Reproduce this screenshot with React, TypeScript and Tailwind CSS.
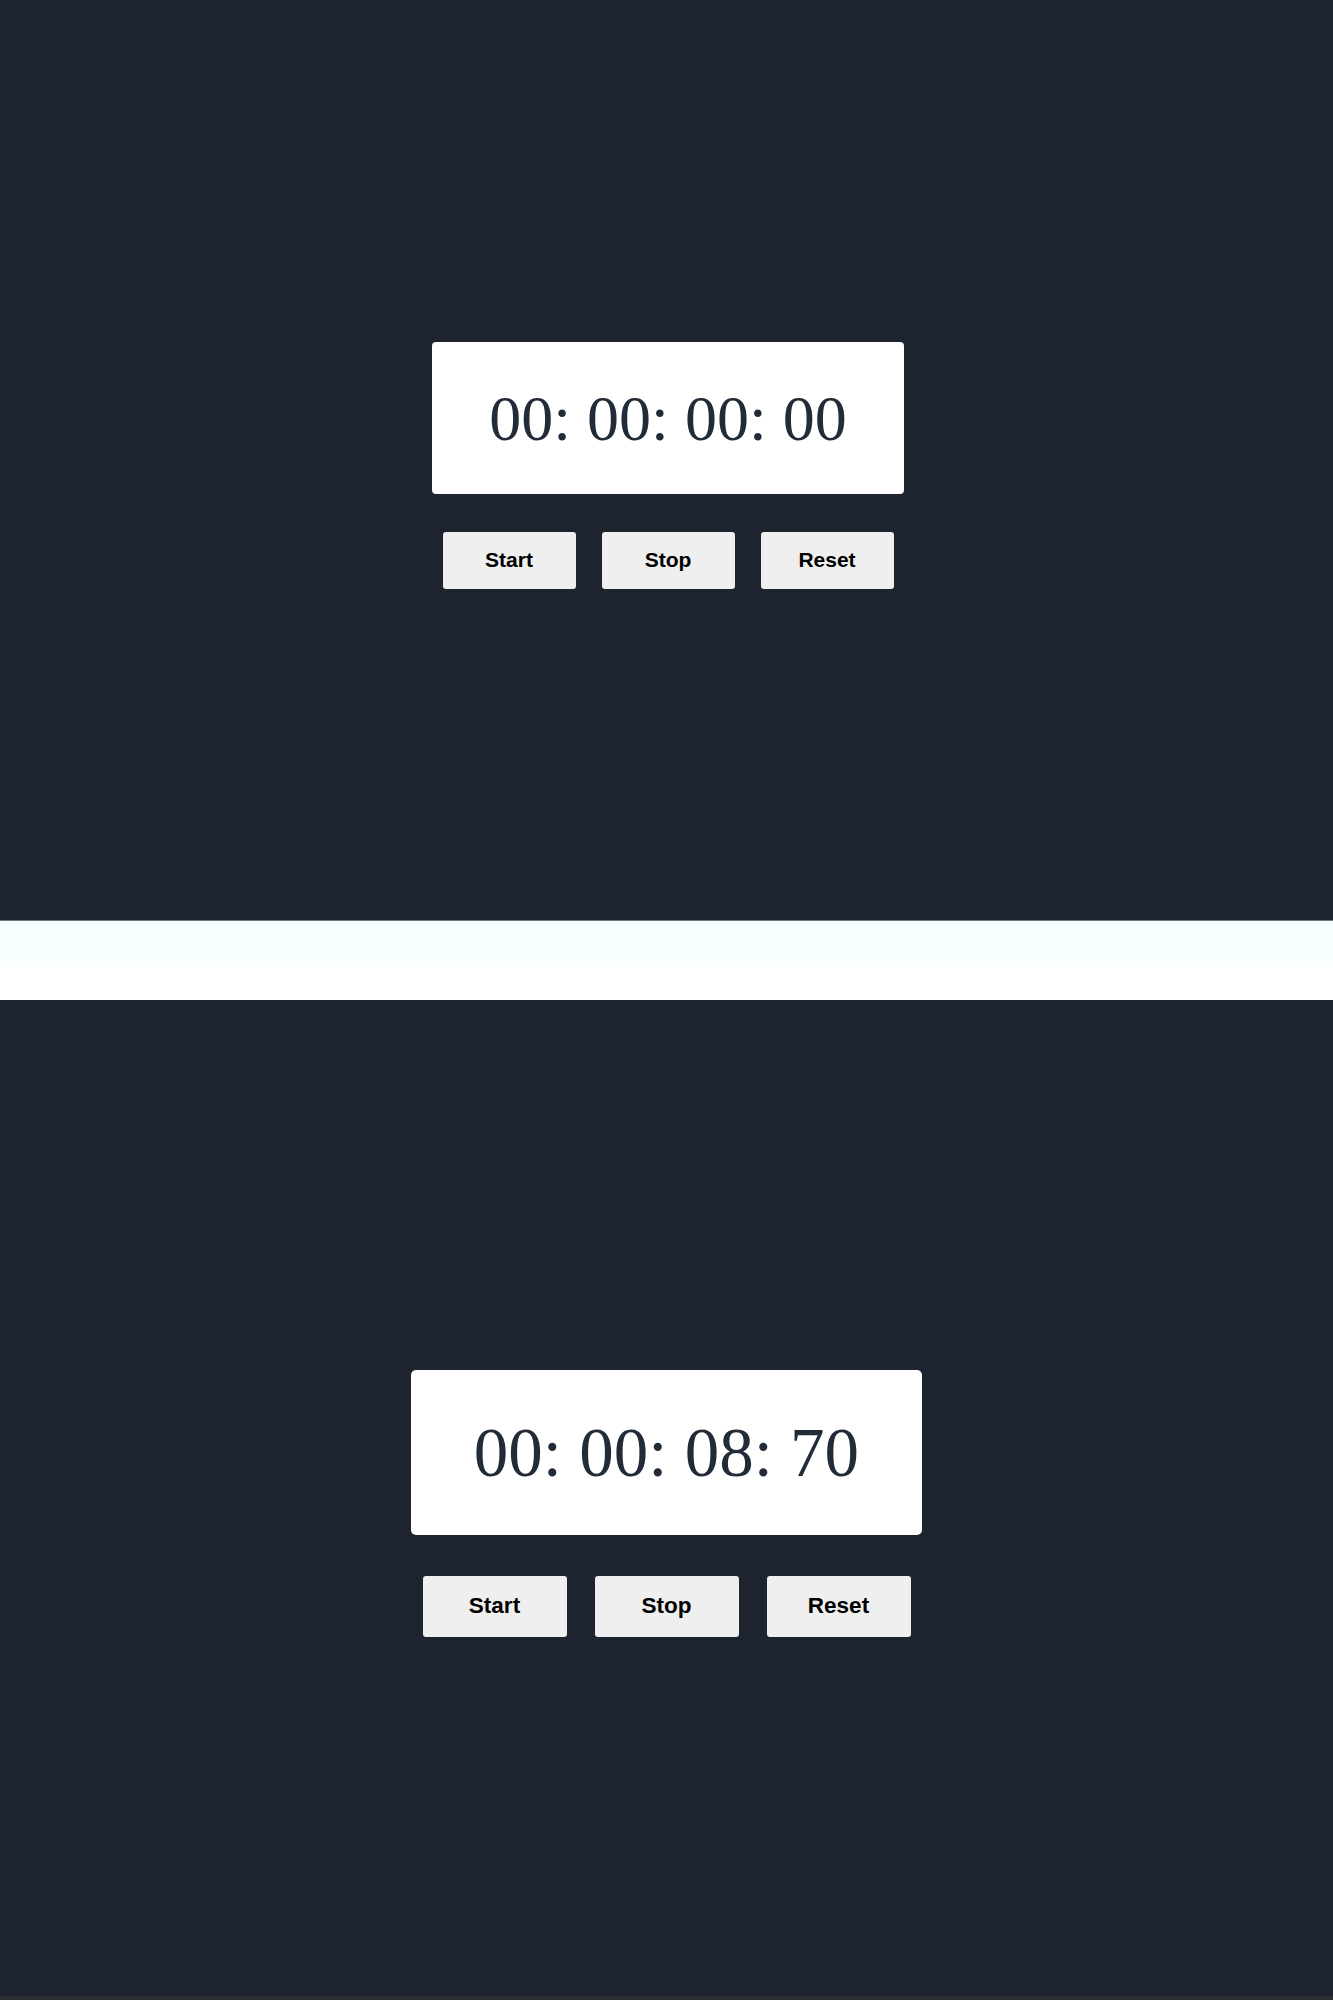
import { FC } from 'react';

type PanelProps = {
  time: string;
  big?: boolean;
};

const Panel: FC<PanelProps> = ({ time, big }) => (
  <div className="flex flex-col items-center">
    <div
      className={
        big
          ? 'flex items-center justify-center bg-white rounded-[5px] w-[511px] h-[165px]'
          : 'flex items-center justify-center bg-white rounded-[4px] w-[472px] h-[152px] ml-[3px]'
      }
    >
      <span
        className={
          big
            ? "font-['Liberation_Serif',serif] text-[69px] leading-none text-[#222b38] mt-[3px]"
            : "font-['Liberation_Serif',serif] text-[64px] leading-none text-[#222b38] mt-[2px]"
        }
      >
        {time}
      </span>
    </div>
    <div className={big ? 'flex gap-[28px] mt-[41px]' : 'flex gap-[26px] mt-[38px] ml-[3px]'}>
      {['Start', 'Stop', 'Reset'].map((label) => (
        <button
          key={label}
          className={
            big
              ? "w-[144px] h-[61px] bg-[#efefef] rounded-[3px] font-['Liberation_Sans',sans-serif] font-bold text-[22.5px] text-black"
              : "w-[133px] h-[57px] bg-[#efefef] rounded-[3px] font-['Liberation_Sans',sans-serif] font-bold text-[21px] text-black"
          }
        >
          {label}
        </button>
      ))}
    </div>
  </div>
);

export default function App() {
  return (
    <div className="flex flex-col w-full">
      <section className="h-[920px] bg-[#1e2330] flex items-center justify-center pt-[10px]">
        <Panel time="00: 00: 00: 00" />
      </section>
      <div className="h-px bg-[#767c86]" />
      <div className="h-[46px] bg-[#f8ffff]" />
      <div className="h-[33px] bg-white" />
      <section className="h-[996px] bg-[#1e2330] flex items-center justify-center pt-[10px]">
        <Panel time="00: 00: 08: 70" big />
      </section>
      <div className="h-[4px] bg-[#2c2f36]" />
    </div>
  );
}
